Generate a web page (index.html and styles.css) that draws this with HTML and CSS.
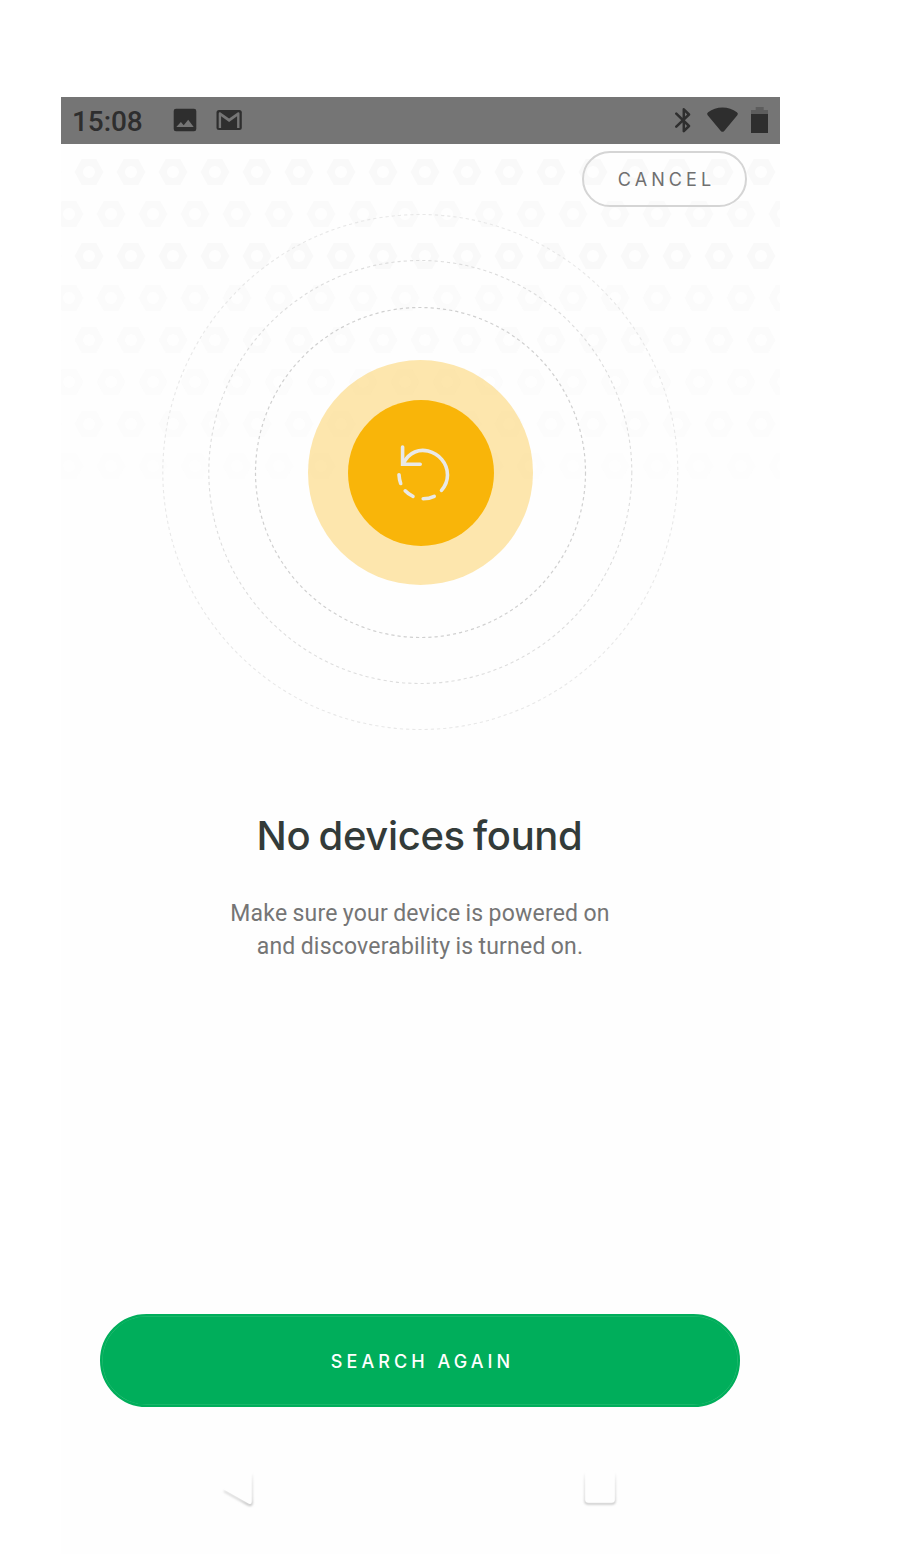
FILE: index.html
```html
<!DOCTYPE html>
<html lang="en">
<head>
<meta charset="utf-8">
<title>No devices found</title>
<link rel="stylesheet" href="styles.css">
</head>
<body>
<main class="phone">
  <header class="status">
    <span class="time">15:08</span>
    <svg class="notifications" width="70" height="24" viewBox="173 108 70 24">
      <path fill="#2e2e2e" fill-rule="evenodd" d="M176 108.700h18a2.300 2.300 0 0 1 2.300 2.300v18a2.300 2.300 0 0 1-2.300 2.300H176a2.300 2.300 0 0 1-2.300-2.300v-18a2.300 2.300 0 0 1 2.300-2.300zM176.300 127h17.400l-5.500-7.300-4.500 5.600-2.800-3.200z"/>
      <rect x="216.500" y="110" width="25.300" height="20" rx="2.500" fill="#2e2e2e"/>
      <path fill="#757575" d="M218.700 128V113.500q0-1.500 1.500-1.300l8.900 6.300 8.900-6.300q1.500-.2 1.500 1.300V128h-2.400v-11.700l-8 5.700-8-5.700V128z"/>
    </svg>
    <svg class="system" width="94" height="28" viewBox="675 106 94 28">
      <path d="M676.300 113.700l12.700 12.300-5.200 5.200v-21.900l5.200 5.200-12.700 12.200" fill="none" stroke="#2e2e2e" stroke-width="2.500" stroke-linejoin="round" stroke-linecap="round"/>
      <path fill="#2e2e2e" d="M721 131.200l-13.500-16.300q-1-1.500.6-2.600Q714.300 107.500 722.500 107.500t14.400 4.800q1.600 1.100.6 2.600L724 131.200q-1.500 1.300-3 0z"/>
      <path fill="#5d5d5d" d="M755.700 107h8v3h4.300v4h-17v-4h4.700z"/>
      <path fill="#2e2e2e" d="M751 114h17v19h-17z"/>
    </svg>
  </header>
  <section class="scanner">
    <button class="cancel">CANCEL</button>
    <svg class="radar" width="719" height="596" viewBox="61 144 719 596">
      <defs>
        <pattern id="nuts-odd" patternUnits="userSpaceOnUse" x="68" y="130" width="42" height="84">
          <path fill="#f9f9f9" fill-rule="evenodd" d="M6.500 42l7.300-13h14.400l7.300 13-7.300 13H13.800zM15 42a6 6 0 1 0 12 0a6 6 0 1 0-12 0z"/>
        </pattern>
        <pattern id="nuts-even" patternUnits="userSpaceOnUse" x="90" y="172" width="42" height="84">
          <path fill="#fafafa" fill-rule="evenodd" d="M6.500 42l7.300-13h14.400l7.300 13-7.300 13H13.800zM15 42a6 6 0 1 0 12 0a6 6 0 1 0-12 0z"/>
        </pattern>
        <linearGradient id="fade" x1="0" y1="0" x2="0" y2="1">
          <stop offset="0" stop-color="#fff"/>
          <stop offset=".32" stop-color="#fff"/>
          <stop offset=".62" stop-color="#fff" stop-opacity=".55"/>
          <stop offset="1" stop-color="#fff" stop-opacity=".14"/>
        </linearGradient>
        <mask id="fade-mask" maskUnits="userSpaceOnUse" x="61" y="144" width="719" height="350">
          <rect x="61" y="144" width="719" height="350" fill="url(#fade)"/>
        </mask>
      </defs>
      <g mask="url(#fade-mask)">
        <rect x="61" y="144" width="719" height="350" fill="url(#nuts-odd)"/>
        <rect x="61" y="144" width="719" height="350" fill="url(#nuts-even)"/>
      </g>
      <g fill="none" stroke-width="1.100" stroke-dasharray="3.200 3">
        <circle cx="420.300" cy="472" r="257.500" stroke="#e8e8e8"/>
        <circle cx="420.300" cy="472" r="211.500" stroke="#dddddd"/>
        <circle cx="420.500" cy="472.500" r="165" stroke="#d0d0d0" stroke-width="1.200"/>
      </g>
      <circle cx="420.500" cy="472.500" r="112.500" fill="#fcb60a" fill-opacity=".33"/>
      <circle cx="421" cy="473" r="73" fill="#f9b509"/>
      <g fill="none" stroke="#e9e9e7" stroke-width="3.600" stroke-linecap="round">
        <path d="M402.600 447v17.300h17.600"/>
        <path d="M403.400 463.500C409 451.500 420 449 428 451.100C439 453.900 447.500 463 447.500 475C447.500 481 445.300 486 441.500 490.400"/>
        <path d="M399 474.700q.2 4.700 1.700 8.800M405.200 490.800q3.400 3.700 7.800 5.500M423.200 498.800q6-.1 11-2.500"/>
      </g>
    </svg>
  </section>
  <h1 class="title">No devices found</h1>
  <p class="message">Make sure your device is powered on<br>and discoverability is turned on.</p>
  <button class="search">SEARCH AGAIN</button>
  <nav class="navigation">
    <svg width="400" height="48" viewBox="220 1466 400 48">
      <defs>
        <linearGradient id="edge" gradientUnits="userSpaceOnUse" x1="0" y1="1472" x2="0" y2="1504">
          <stop offset="0" stop-color="#ddd" stop-opacity="0"/>
          <stop offset=".3" stop-color="#e2e2e2"/>
          <stop offset=".85" stop-color="#d4d4d4"/>
          <stop offset="1" stop-color="#bbb"/>
        </linearGradient>
        <filter id="soft" x="-20%" y="-20%" width="140%" height="140%"><feGaussianBlur stdDeviation=".8"/></filter>
      </defs>
      <path d="M224 1491l24.500 13.500q3 1.300 3.300-1.500V1474" fill="none" stroke="url(#edge)" stroke-width="2" filter="url(#soft)"/>
      <path d="M223 1489l26 14.700q2.700 1 2.700-1.700V1472z" fill="#fefefe"/>
      <rect x="585.200" y="1473" width="29.600" height="30.500" rx="3" fill="none" stroke="url(#edge)" stroke-width="2" filter="url(#soft)"/>
      <rect x="585.200" y="1470" width="29.600" height="32.700" rx="3" fill="#fefefe"/>
    </svg>
  </nav>
</main>
</body>
</html>
```

FILE: styles.css
```css
* { box-sizing: border-box; }
body { margin: 0; background: #fff; }
.phone {
  width: 719px;
  height: 1457px;
  margin: 97px 0 0 61px;
  display: flex;
  flex-direction: column;
  align-items: center;
  background: #fefefe;
  font-family: Roboto, "Liberation Sans", sans-serif;
}
.status {
  width: 100%;
  height: 47px;
  flex: none;
  display: flex;
  align-items: center;
  padding: 0 11px;
  background: #757575;
}
.time {
  width: 101px;
  padding-top: 2px;
  font-size: 28px;
  font-weight: 500;
  line-height: 32px;
  letter-spacing: -.1px;
  color: #2e2e2e;
}
.notifications { margin-top: -1px; }
.system { margin: -2px 0 0 auto; }
.scanner { position: relative; width: 100%; height: 596px; flex: none; }
.radar { display: block; }
.cancel, .search {
  font-family: Inter, "Liberation Sans", sans-serif;
  font-size: 18px;
  line-height: 22px;
}
.cancel {
  position: absolute;
  top: 7px;
  right: 33px;
  width: 165px;
  height: 56px;
  padding: 2px 0 0 4px;
  border: 2px solid #d5d5d5;
  border-radius: 28px;
  background: transparent;
  letter-spacing: 4.1px;
  color: #707070;
}
.title {
  margin: 71px 2px 0 0;
  font-family: Inter, "Liberation Sans", sans-serif;
  font-size: 40px;
  font-weight: 540;
  line-height: 50px;
  letter-spacing: -.35px;
  word-spacing: -2px;
  color: #333b39;
}
.message {
  margin: 36px 1px 0 0;
  font-size: 23px;
  line-height: 33px;
  letter-spacing: .2px;
  word-spacing: -.7px;
  text-align: center;
  color: #757575;
}
.search {
  width: 640px;
  height: 93px;
  margin: 351px 1px 0 0;
  padding: 2px 0 0 5px;
  flex: none;
  border: 2px solid #00ae5b;
  border-radius: 47px;
  background: #00ae5b;
  box-shadow: inset 0 0 0 .5px #35bd7a;
  letter-spacing: 4.05px;
  font-weight: 500;
  color: #fff;
}
.navigation { width: 400px; margin: 59px 1px 0 0; }
.navigation svg { display: block; }
```
